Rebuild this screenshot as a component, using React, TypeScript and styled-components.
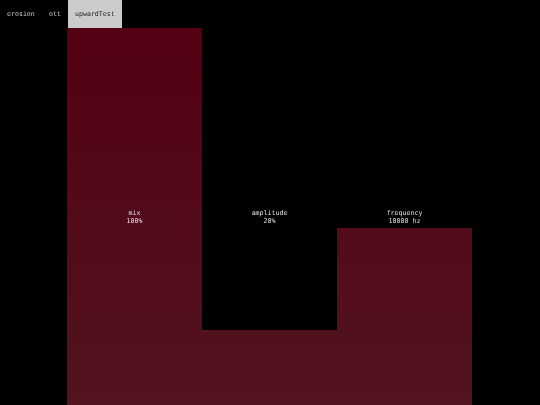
import React, { useState } from "react";
import styled, { createGlobalStyle } from "styled-components";

type Param = {
  id: string;
  name: string;
  display: string;
  value: number; // normalised 0..1
};

const tabs = ["erosion", "ott", "upwardTest"];

const params: Param[] = [
  { id: "mix", name: "mix", display: "100%", value: 1 },
  { id: "amp", name: "amplitude", display: "20%", value: 0.2 },
  { id: "freq", name: "frequency", display: "10000 hz", value: 0.47 },
];

const GlobalStyle = createGlobalStyle`
  html, body {
    margin: 0;
    padding: 0;
    background: #000;
  }
  body {
    font-family: "DejaVu Sans Mono", "Liberation Mono", monospace;
    -webkit-font-smoothing: antialiased;
  }
`;

export default function App() {
  const [active, setActive] = useState(2);

  return (
    <Page>
      <GlobalStyle />
      <TabBar>
        {tabs.map((t, i) => (
          <Tab key={t} $active={i === active} onClick={() => setActive(i)}>
            {t}
          </Tab>
        ))}
      </TabBar>
      <Main>
        <Sliders>
          {params.map((p) => (
            <Column key={p.id}>
              <Fill style={{ height: `${p.value * 100}%` }} />
              <Label>
                <span>{p.name}</span>
                <span>{p.display}</span>
              </Label>
            </Column>
          ))}
        </Sliders>
      </Main>
    </Page>
  );
}

const Page = styled.div`
  display: flex;
  flex-direction: column;
  height: 100vh;
  background: #000;
  overflow: hidden;
`;

const TabBar = styled.div`
  display: flex;
  height: 28px;
  flex-shrink: 0;
`;

const Tab = styled.button<{ $active: boolean }>`
  border: none;
  margin: 0;
  padding: 0 7px;
  height: 100%;
  font-family: "DejaVu Sans Mono", "Liberation Mono", monospace;
  font-size: 6.6px;
  background: ${({ $active }) => ($active ? "#cbcbcb" : "#000")};
  color: ${({ $active }) => ($active ? "#222" : "#cccccc")};
  cursor: pointer;
  will-change: transform;
`;

const Main = styled.div`
  flex: 1;
  display: flex;
  padding-left: 67px;
`;

const Sliders = styled.div`
  width: 405px;
  display: grid;
  grid-template-columns: repeat(3, 1fr);
`;

const Column = styled.div`
  position: relative;
  display: flex;
  flex-direction: column;
  justify-content: flex-end;
`;

const Fill = styled.div`
  width: 100%;
  background: linear-gradient(to bottom, #540013 28px, #521420 100%) fixed;
`;

const Label = styled.div`
  position: absolute;
  inset: 0;
  display: flex;
  flex-direction: column;
  align-items: center;
  justify-content: center;
  padding-top: 1px;
  color: #e2e2e2;
  font-size: 6.6px;
  line-height: 8px;
  pointer-events: none;
  will-change: transform;
`;
